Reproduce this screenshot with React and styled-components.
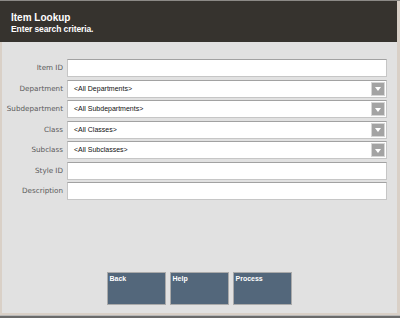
import { Fragment } from "react";
import styled, { createGlobalStyle } from "styled-components";

const Global = createGlobalStyle`
  html, body { margin: 0; padding: 0; background: #e1e1e1; }
  body { font-family: "Liberation Sans", Arial, sans-serif; }
`;

const Screen = styled.div`
  width: 400px;
  height: 318px;
  display: flex;
  flex-direction: column;
  overflow: hidden;
  background: #e1e1e1;
`;

const TopLine = styled.div`
  height: 1px;
  background: #8c8a86;
`;

const Middle = styled.div`
  flex: 1;
  display: flex;
  min-height: 0;
`;

const Main = styled.div`
  flex: 1;
  display: flex;
  flex-direction: column;
`;

const RightEdge = styled.div`
  width: 3px;
  background: #d9d0c7;
`;

const Header = styled.div`
  height: 41px;
  background: #36332e;
  color: #fff;
  padding: 11px 0 0 11px;
  box-sizing: border-box;
  font-weight: bold;
`;

const Title = styled.div`
  font-size: 10px;
  line-height: 12px;
`;

const Subtitle = styled.div`
  font-size: 8.5px;
  line-height: 11px;
  letter-spacing: -0.1px;
`;

const Body = styled.div`
  flex: 1;
  display: flex;
  flex-direction: column;
  border-left: 2px solid #d9d0c7;
  border-bottom: 2px solid #d9d0c7;
  padding: 17px 10px 8px 0;
`;

const Form = styled.div`
  display: grid;
  grid-template-columns: 65px 1fr;
  row-gap: 2.5px;
`;

const Label = styled.div`
  font-family: "DejaVu Sans", Verdana, sans-serif;
  font-size: 7.2px;
  color: #5a5a5a;
  text-align: right;
  padding-right: 4px;
  height: 18px;
  line-height: 17px;
  white-space: nowrap;
  margin-left: -2px;
`;

const Field = styled.div`
  position: relative;
  height: 18px;
  box-sizing: border-box;
  background: #fff;
  border: 1px solid #c6c6c6;
  border-top-color: #a2a2a2;
  font-size: 7px;
  color: #111;
  line-height: 16px;
  padding-left: 6px;
`;

const DropButton = styled.div`
  position: absolute;
  right: 1px;
  top: 1px;
  width: 14px;
  height: 14px;
  box-sizing: border-box;
  background: #a3a3a3;
  border: 1px solid #d6d6d6;
  display: flex;
  align-items: center;
  justify-content: center;
`;

const Arrow = styled.div`
  width: 0;
  height: 0;
  border-left: 3.5px solid transparent;
  border-right: 3.5px solid transparent;
  border-top: 4px solid #fff;
  margin-top: 1px;
`;

const Actions = styled.div`
  margin-top: auto;
  display: flex;
  justify-content: center;
  gap: 4px;
  padding-left: 9px;
`;

const ActionButton = styled.div`
  width: 59px;
  height: 33px;
  box-sizing: border-box;
  background: #53677b;
  border: 1px solid #aaaaaa;
  color: #fff;
  font-weight: bold;
  font-size: 7px;
  padding: 1px 2px;
  line-height: 9px;
`;

const BottomLine = styled.div`
  height: 3px;
  background: #6b6b6b;
  border-top: 1px solid #b8b8b8;
  box-sizing: border-box;
`;

const fields = [
  { label: "Item ID" },
  { label: "Department", value: "<All Departments>", select: true },
  { label: "Subdepartment", value: "<All Subdepartments>", select: true },
  { label: "Class", value: "<All Classes>", select: true },
  { label: "Subclass", value: "<All Subclasses>", select: true },
  { label: "Style ID" },
  { label: "Description" },
];

export default function App() {
  return (
    <>
      <Global />
      <Screen>
        <TopLine />
        <Middle>
          <Main>
            <Header>
              <Title>Item Lookup</Title>
              <Subtitle>Enter search criteria.</Subtitle>
            </Header>
            <Body>
              <Form>
                {fields.map((f) => (
                  <Fragment key={f.label}>
                    <Label>{f.label}</Label>
                    <Field>
                      {f.value}
                      {f.select && (
                        <DropButton>
                          <Arrow />
                        </DropButton>
                      )}
                    </Field>
                  </Fragment>
                ))}
              </Form>
              <Actions>
                <ActionButton>Back</ActionButton>
                <ActionButton>Help</ActionButton>
                <ActionButton>Process</ActionButton>
              </Actions>
            </Body>
          </Main>
          <RightEdge />
        </Middle>
        <BottomLine />
      </Screen>
    </>
  );
}
